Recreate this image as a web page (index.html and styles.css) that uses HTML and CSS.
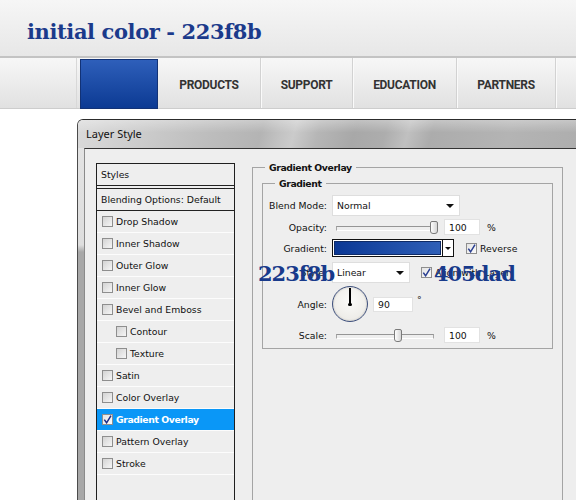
FILE: index.html
```html
<!DOCTYPE html>
<html lang="en">
<head>
    <meta charset="UTF-8">
    <meta name="viewport" content="width=device-width, initial-scale=1.0">
    <title>initial color - 223f8b</title>
    <link rel="stylesheet" href="styles.css">
</head>
<body>
    <!-- header -->
    <header class="site-header">
        <h1 class="site-title">initial color - 223f8b</h1>
    </header>

    <!-- nav -->
    <nav class="site-nav">
        <span class="nav-spacer"></span>
        <a href="#" class="nav-home"></a>
        <a href="#" class="nav-item nav-products">PRODUCTS</a>
        <a href="#" class="nav-item nav-support">SUPPORT</a>
        <a href="#" class="nav-item nav-education">EDUCATION</a>
        <a href="#" class="nav-item nav-partners">PARTNERS</a>
    </nav>

    <!-- layer style dialog -->
    <div class="dialog">
        <div class="dialog-title">Layer Style</div>
        <div class="dialog-body">
            <ul class="style-list">
                <li class="style-head">Styles</li>
                <li class="style-blend">Blending Options: Default</li>
                <li class="style-item"><span class="check"></span>Drop Shadow</li>
                <li class="style-item"><span class="check"></span>Inner Shadow</li>
                <li class="style-item"><span class="check"></span>Outer Glow</li>
                <li class="style-item"><span class="check"></span>Inner Glow</li>
                <li class="style-item"><span class="check"></span>Bevel and Emboss</li>
                <li class="style-item sub"><span class="check"></span>Contour</li>
                <li class="style-item sub"><span class="check"></span>Texture</li>
                <li class="style-item"><span class="check"></span>Satin</li>
                <li class="style-item"><span class="check"></span>Color Overlay</li>
                <li class="style-item active">
                    <span class="check checked"><svg viewBox="0 0 9 9" width="9" height="9"><path d="M1.3 4.6 L3.6 7.8 L8 0.6" fill="none" stroke="#1b2c86" stroke-width="1.5"/></svg></span>Gradient Overlay
                </li>
                <li class="style-item"><span class="check"></span>Pattern Overlay</li>
                <li class="style-item"><span class="check"></span>Stroke</li>
            </ul>

            <fieldset class="overlay-group">
                <legend>Gradient Overlay</legend>
                <fieldset class="gradient-group">
                    <legend>Gradient</legend>

                    <div class="opt-row row-blend">
                        <span class="opt-label">Blend Mode:</span>
                        <div class="select select-blend">Normal<span class="arrow"></span></div>
                    </div>

                    <div class="opt-row row-opacity">
                        <span class="opt-label">Opacity:</span>
                        <div class="slider"><span class="slider-thumb" style="left:94px"></span></div>
                        <div class="num">100</div>
                        <span class="unit">%</span>
                    </div>

                    <div class="opt-row row-gradient">
                        <span class="opt-label">Gradient:</span>
                        <div class="grad-box">
                            <span class="grad-fill"></span>
                            <span class="grad-arrow"><span class="arrow small"></span></span>
                        </div>
                        <label class="opt-check opt-reverse">
                            <span class="check checked"><svg viewBox="0 0 9 9" width="9" height="9"><path d="M1.3 4.6 L3.6 7.8 L8 0.6" fill="none" stroke="#2a3f92" stroke-width="1.5"/></svg></span>Reverse
                        </label>
                    </div>

                    <div class="opt-row row-style">
                        <span class="opt-label">Style:</span>
                        <div class="select select-style">Linear<span class="arrow"></span></div>
                        <label class="opt-check">
                            <span class="check checked"><svg viewBox="0 0 9 9" width="9" height="9"><path d="M1.3 4.6 L3.6 7.8 L8 0.6" fill="none" stroke="#2a3f92" stroke-width="1.5"/></svg></span>Align with Layer
                        </label>
                        <!-- colour notes written over the dialog -->
                        <span class="hex hex-from">223f8b</span>
                        <span class="hex hex-to">405dad</span>
                    </div>

                    <div class="opt-row row-angle">
                        <span class="opt-label">Angle:</span>
                        <div class="dial"></div>
                        <div class="num num-angle">90</div>
                        <span class="deg">°</span>
                    </div>

                    <div class="opt-row row-scale">
                        <span class="opt-label">Scale:</span>
                        <div class="slider"><span class="slider-thumb" style="left:58px"></span></div>
                        <div class="num">100</div>
                        <span class="unit">%</span>
                    </div>
                </fieldset>
            </fieldset>
        </div>
    </div>
</body>
</html>
```

FILE: styles.css
```css
/* base */
* {
    box-sizing: border-box;
}

body {
    margin: 0;
    width: 576px;
    height: 500px;
    overflow: hidden;
    background: #fff;
    font-family: "DejaVu Sans", sans-serif;
    font-size: 9.3px;
    color: #111;
}

/* header */
.site-header {
    height: 58px;
    padding-left: 27px;
    background: linear-gradient(#f6f6f6, #e7e7e7);
    border-bottom: 2px solid #c3c3c3;
}

.site-title {
    margin: 0;
    padding-top: 20px;
    font: bold 21px/24px "DejaVu Serif", serif;
    letter-spacing: -0.4px;
    color: #1b3a8b;
}

/* nav */
.site-nav {
    display: flex;
    height: 51px;
    background: linear-gradient(#f7f7f7, #e1e1e1);
    border-bottom: 1px solid #cdcdcd;
}

.nav-spacer {
    width: 77px;
    border-right: 1px solid #d8d8d8;
}

.nav-home {
    width: 78px;
    height: 50px;
    margin: 1px 0 0 3px;
    background: linear-gradient(#2e5fba, #0c3a93);
    border: 1px solid #123276;
}

.nav-item {
    display: flex;
    align-items: center;
    justify-content: center;
    padding-top: 4px;
    border-right: 1px solid #d2d2d2;
    box-shadow: 1px 0 0 #fafafa;
    color: #333;
    font: bold 12px "Roboto", sans-serif;
    letter-spacing: -0.3px;
    text-decoration: none;
}

.nav-products { width: 103px; }
.nav-support { width: 92px; }
.nav-education { width: 104px; }
.nav-partners { width: 99px; }

/* dialog */
.dialog {
    display: flex;
    flex-direction: column;
    width: 540px;
    height: 400px;
    margin: 10px 0 0 77px;
    border-left: 1px solid #4b4b4b;
    border-top: 1px solid #2c2c2c;
    border-top-left-radius: 6px;
    overflow: hidden;
    background: linear-gradient(#e4e4e4 0, #dedede 125px, #a7a7a7 132px);
}

.dialog-title {
    height: 28px;
    padding-left: 8px;
    font: 11px/28px "Noto Sans", sans-serif;
    color: #111;
    background:
        linear-gradient(rgba(255,255,255,.3), rgba(255,255,255,0) 45%),
        linear-gradient(105deg, #dadada 0, #cdcdcd 60px, #bdbdbd 130px, #b4b4b4 180px, #c2c2c2 198px, #cbcbcb 212px, #b6b6b6 235px, #a8a8a8 270px, #adadad 300px, #c0c0c0 322px, #acacac 345px, #b4b4b4 420px, #a9a9a9 540px);
}

.dialog-body {
    flex: 1;
    display: flex;
    align-items: flex-start;
    margin-left: 6px;
    padding: 12px 0 0 11px;
    border-left: 1px solid #8a8a8a;
    border-top: 1px solid #333;
    background: #eeeeee;
}

/* styles list */
.style-list {
    width: 139px;
    height: 360px;
    margin: 2px 0 0;
    padding: 0;
    list-style: none;
    border: 1px solid #1f1f1f;
}

.style-head {
    height: 22px;
    padding-left: 4px;
    line-height: 21px;
    border-bottom: 1px solid #222;
}

.style-blend {
    height: 23px;
    margin-top: 2px;
    padding-left: 4px;
    line-height: 21px;
    border-top: 1px solid #222;
    border-bottom: 1px solid #222;
}

.style-item {
    display: flex;
    align-items: center;
    height: 22px;
    padding-left: 5px;
    border-bottom: 1px solid #fcfcfc;
}

.style-item .check {
    margin-right: 3px;
}

.style-item.sub {
    padding-left: 19px;
}

.style-item.active {
    background: #0a97f7;
    color: #fff;
    font-weight: bold;
    letter-spacing: -0.4px;
}

.check {
    display: flex;
    align-items: center;
    justify-content: center;
    flex-shrink: 0;
    width: 11px;
    height: 11px;
    border: 1px solid #8e8e8e;
    background: linear-gradient(135deg, #d3d3d3, #f6f6f6);
}

.check.checked {
    background: linear-gradient(135deg, #e4e4e4, #fbfbfb);
}

/* option groups */
fieldset {
    min-width: 0;
    margin: 0;
    border: 1px solid #a4a4a4;
}

legend {
    margin-left: 3px;
    padding: 0 4px;
    font-weight: bold;
    line-height: 13px;
    letter-spacing: -0.4px;
}

.overlay-group {
    width: 311px;
    height: 400px;
    margin-left: 17px;
    padding: 3px 9px 0;
}

.gradient-group {
    width: 291px;
    padding: 5px 0 5px;
}

.gradient-group legend {
    margin-left: 12px;
}

.opt-row {
    position: relative;
    display: flex;
    align-items: center;
}

.opt-label {
    flex-shrink: 0;
    width: 64px;
    margin-right: 5px;
    text-align: right;
}

.row-blend { height: 21px; }
.row-opacity { height: 16px; margin-top: 3px; }
.row-gradient { height: 18px; margin-top: 4px; }
.row-style { height: 21px; margin-top: 5px; }
.row-angle { height: 36px; margin-top: 3px; }
.row-scale { height: 16px; margin-top: 5px; }

.select {
    display: flex;
    align-items: center;
    height: 21px;
    padding: 0 5px 0 4px;
    background: #fff;
    border: 1px solid #dedede;
}

.select-blend { width: 128px; }
.select-style { width: 78px; }

.arrow {
    margin-left: auto;
    width: 0;
    height: 0;
    border-left: 4px solid transparent;
    border-right: 4px solid transparent;
    border-top: 4px solid #111;
}

.arrow.small {
    margin: 0;
    border-left-width: 3px;
    border-right-width: 3px;
    border-top-width: 3px;
}

.slider {
    position: relative;
    flex-shrink: 0;
    width: 98px;
    height: 13px;
    margin: 0 10px 0 4px;
}

.slider::before {
    content: "";
    position: absolute;
    left: 0;
    right: 0;
    top: 5px;
    height: 3px;
    border-top: 1px solid #959595;
    border-bottom: 1px solid #fff;
    border-left: 1px solid #a5a5a5;
    border-right: 1px solid #a5a5a5;
}

.slider-thumb {
    position: absolute;
    top: 0;
    width: 8px;
    height: 13px;
    border: 1px solid #7a7a7a;
    border-radius: 2px 2px 3px 3px;
    background: linear-gradient(90deg, #fdfdfd, #d6d6d6);
}

.num {
    width: 36px;
    height: 16px;
    padding-left: 4px;
    line-height: 15px;
    background: #fff;
    border: 1px solid #e2e2e2;
}

.num-angle {
    width: 40px;
    height: 15px;
    margin-left: 5px;
    line-height: 14px;
}

.unit {
    margin-left: 7px;
}

.deg {
    align-self: flex-start;
    margin: 9px 0 0 4px;
    line-height: 1;
}

.grad-box {
    display: flex;
    width: 122px;
    height: 18px;
    padding: 1px 0 1px 1px;
    background: #fff;
    border: 1px solid #111;
}

.grad-fill {
    flex: 1;
    border: 1px solid #0e2a66;
    background: linear-gradient(90deg, #0b3895, #2f5fb7);
}

.grad-arrow {
    display: flex;
    align-items: center;
    justify-content: center;
    width: 11px;
    margin: -1px 0 -1px 1px;
    border-left: 1px solid #111;
}

.opt-check {
    display: flex;
    align-items: center;
    margin-left: 11px;
}

.opt-check .check {
    margin-right: 3px;
}

.opt-reverse {
    margin-left: 12px;
}

.dial {
    position: relative;
    flex-shrink: 0;
    width: 36px;
    height: 36px;
    border: 1px solid #3d4f7c;
    border-radius: 50%;
    background: radial-gradient(circle at 50% 40%, #fbfbf9, #e8e6e1);
    box-shadow: inset 0 0 2px rgba(0,0,0,.25);
}

.dial::before {
    content: "";
    position: absolute;
    left: 16px;
    top: 1px;
    width: 1.5px;
    height: 16px;
    background: #000;
}

.dial::after {
    content: "";
    position: absolute;
    left: 15px;
    top: 15.5px;
    width: 3.5px;
    height: 3.5px;
    border-radius: 50%;
    background: #000;
}

/* colour notes over the dialog */
.hex {
    position: absolute;
    top: 1px;
    font: bold 21px/21px "DejaVu Serif", serif;
    letter-spacing: -1px;
    color: #183a8b;
}

.hex-from { left: -5px; }
.hex-to { left: 171px; }
```
